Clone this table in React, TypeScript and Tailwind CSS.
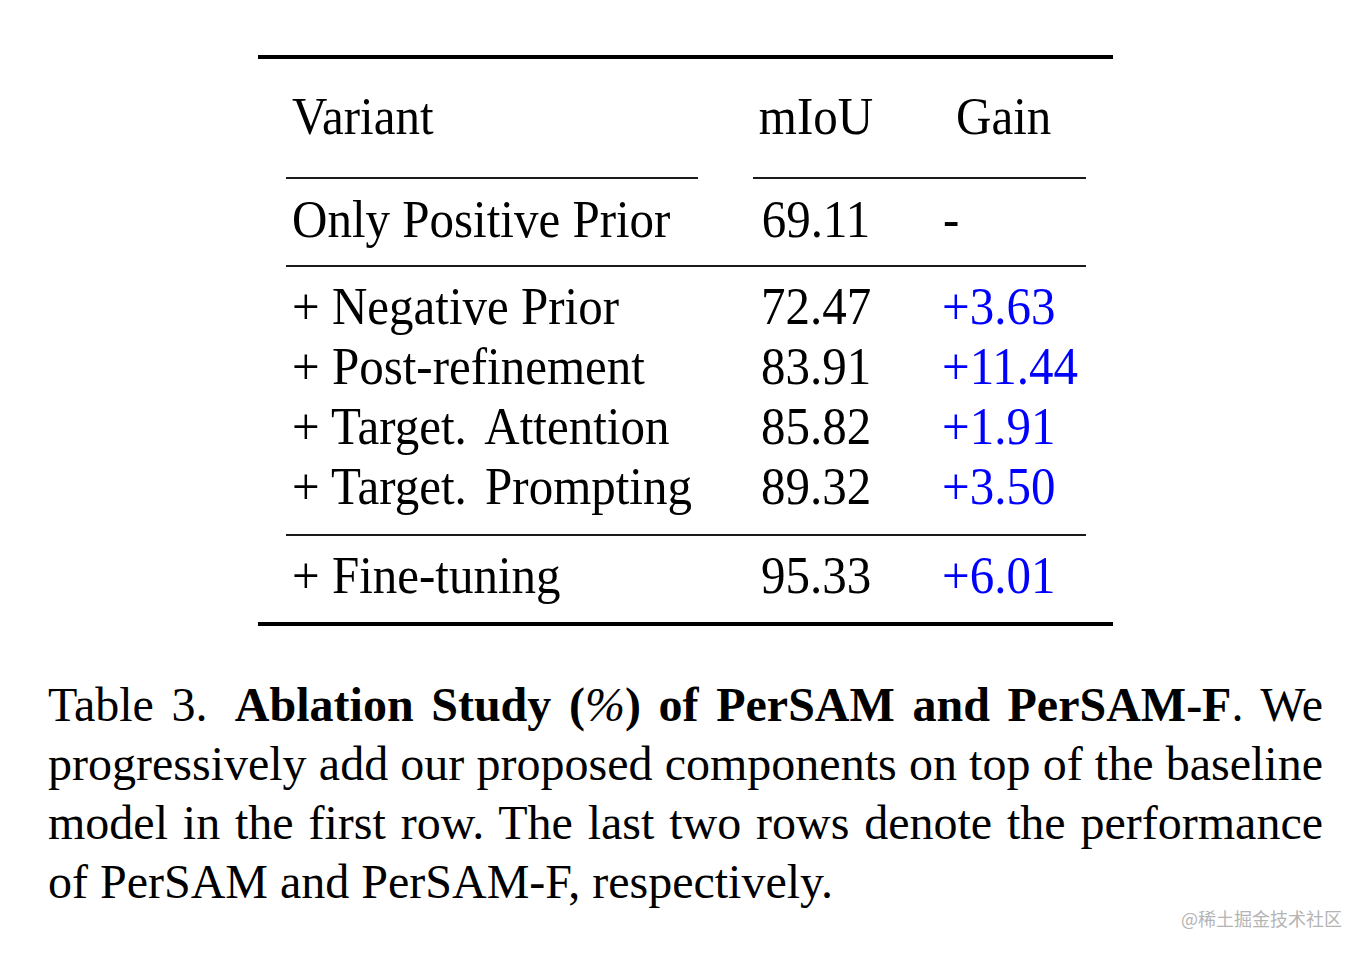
const rows = [
  { name: '+ Negative Prior', miou: '72.47', gain: '+3.63' },
  { name: '+ Post-refinement', miou: '83.91', gain: '+11.44' },
  { name: <>+ Target.<span className="pl-[8px]" /> Attention</>, miou: '85.82', gain: '+1.91' },
  { name: <>+ Target.<span className="pl-[6px]" /> Prompting</>, miou: '89.32', gain: '+3.50' },
]

function Cell({ children, className = '' }: { children: React.ReactNode; className?: string }) {
  return <span className={`inline-block origin-center scale-y-[1.07] whitespace-nowrap ${className}`}>{children}</span>
}

function Row({ name, miou, gain, h }: { name: React.ReactNode; miou: string; gain: string; h: string }) {
  return (
    <div className={`flex ${h}`}>
      <div className="w-[440px] pl-[6px]">
        <Cell>{name}</Cell>
      </div>
      <div className="w-[180px] text-center">
        <Cell>{miou}</Cell>
      </div>
      <div className="pl-[36px]">
        <Cell className={gain === '-' ? 'pl-[1px]' : 'text-[#0000ff]'}>{gain}</Cell>
      </div>
    </div>
  )
}

export default function App() {
  return (
    <div className="relative min-h-[954px] bg-white font-['Liberation_Serif','Times_New_Roman',serif] text-black">
      <div className="ml-[258px] w-[855px] pt-[55px] text-[49px]">
        <div className="h-[4px] bg-black" />

        <div className="pl-[28px] pr-[27px]">
          {/* header */}
          <div className="flex h-[116px] leading-[116px]">
            <div className="w-[440px] pl-[6px]">
              <Cell>Variant</Cell>
            </div>
            <div className="w-[180px] text-center">
              <Cell>mIoU</Cell>
            </div>
            <div className="pl-[50px]">
              <Cell>Gain</Cell>
            </div>
          </div>
          <div className="mt-[2px] flex">
            <div className="h-[2px] w-[412px] bg-[#1a1a1a]" />
            <div className="ml-[55px] h-[2px] w-[333px] bg-[#1a1a1a]" />
          </div>

          {/* baseline */}
          <div className="pb-[4px]">
            <Row name="Only Positive Prior" miou="69.11" gain="-" h="h-[82px] leading-[82px]" />
          </div>
          <div className="h-[2px] bg-[#1a1a1a]" />

          {/* PerSAM components */}
          <div className="pt-[10px] pb-[17px]">
            {rows.map((r, i) => (
              <Row key={i} {...r} h="h-[60px] leading-[60px]" />
            ))}
          </div>
          <div className="h-[2px] bg-[#1a1a1a]" />

          <div className="pb-[6px]">
            <Row name="+ Fine-tuning" miou="95.33" gain="+6.01" h="h-[80px] leading-[80px]" />
          </div>
        </div>

        <div className="h-[4px] bg-black" />
      </div>

      {/* caption */}
      <div className="ml-[48px] mt-[49px] w-[1275px] text-[48px] leading-[59px] text-justify">
        <p className="[text-align-last:justify]">
          Table 3.{'\u2009'} <b>Ablation Study (<span className="font-normal italic">%</span>) of PerSAM and PerSAM-F</b>. We
        </p>
        <p className="[text-align-last:justify]">progressively add our proposed components on top of the baseline</p>
        <p className="[text-align-last:justify]">model in the first row. The last two rows denote the performance</p>
        <p>of PerSAM and PerSAM-F, respectively.</p>
      </div>

      <div className="absolute left-[1181px] top-[905px] font-['Noto_Sans_CJK_SC',sans-serif] text-[18px] leading-[26px] text-[#b4b4b4]">
        @稀土掘金技术社区
      </div>
    </div>
  )
}
